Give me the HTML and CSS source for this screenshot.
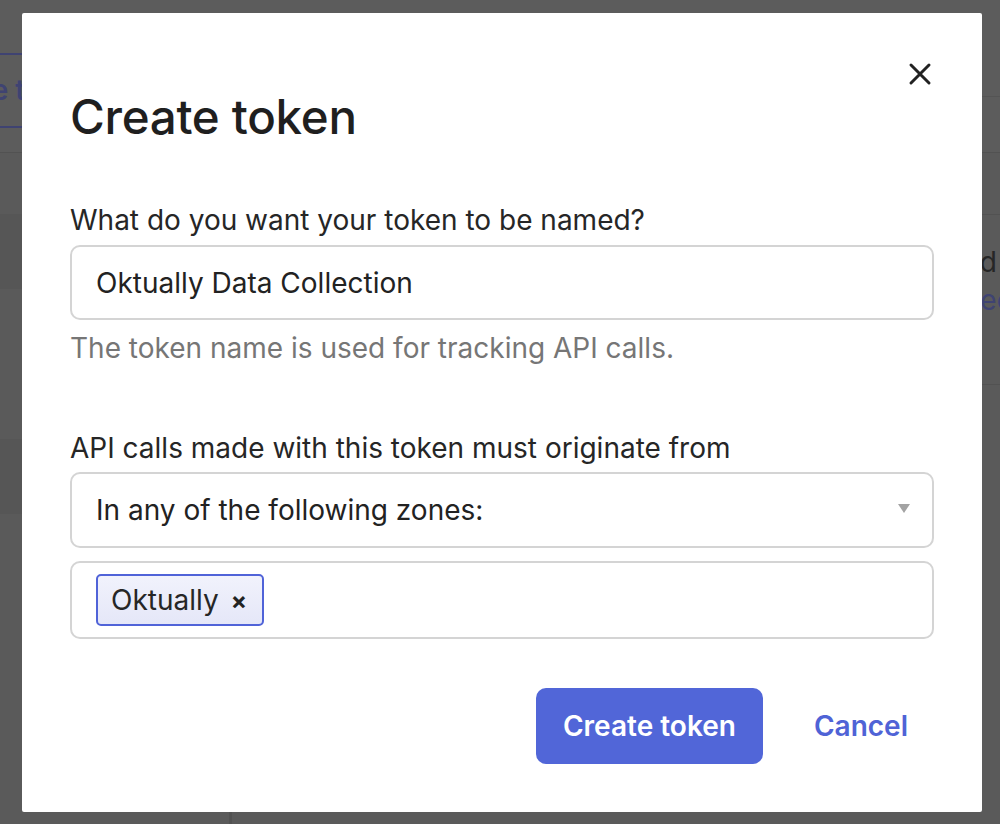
FILE: index.html
```html
<!DOCTYPE html>
<html lang="en">
<head>
<meta charset="utf-8">
<title>Create token</title>
<link rel="stylesheet" href="styles.css">
</head>
<body>
<div class="page">
  <header class="bg-top">
    <div class="bg-btn">Create token</div>
    <div class="bg-top-right"></div>
  </header>
  <div class="bg-main">
    <aside class="bg-side">
      <div class="bg-band"></div>
      <div class="bg-gap"></div>
      <div class="bg-band"></div>
    </aside>
    <section class="bg-content">
      <div class="bg-card">
        <p class="bg-dark">Tokens you have created</p>
        <p class="bg-link">View selected</p>
      </div>
    </section>
  </div>
</div>

<div class="overlay">
  <div class="modal" role="dialog" aria-labelledby="modal-title">
    <div class="modal-head">
      <h1 id="modal-title" class="modal-title">Create token</h1>
      <button class="close-btn" aria-label="Close">
        <svg width="24" height="24" viewBox="0 0 24 24"><path d="M3 3 L21 21 M21 3 L3 21" stroke="#222" stroke-width="3" stroke-linecap="round" fill="none"/></svg>
      </button>
    </div>

    <div class="field">
      <label class="field-label">What do you want your token to be named?</label>
      <div class="text-input">Oktually Data Collection</div>
      <p class="field-help">The token name is used for tracking API calls.</p>
    </div>

    <div class="field field-origin">
      <label class="field-label">API calls made with this token must originate from</label>
      <div class="select">
        <span>In any of the following zones:</span>
        <span class="select-arrow"></span>
      </div>
      <div class="chips">
        <span class="chip">Oktually <span class="chip-x">×</span></span>
      </div>
    </div>

    <div class="actions">
      <button class="btn-primary">Create token</button>
      <button class="btn-link">Cancel</button>
    </div>
  </div>
</div>
</body>
</html>
```

FILE: styles.css
```css
* { box-sizing: border-box; }
html, body {
  margin: 0;
  padding: 0;
  width: 1000px;
  height: 824px;
  overflow: hidden;
  font-family: Inter, "Noto Sans", "Liberation Sans", sans-serif;
}
body { position: relative; background: #5a5a5a; }

/* ---------- dimmed page behind the dialog ---------- */
.page {
  width: 1000px;
  height: 824px;
  background: #5a5a5a;
  display: flex;
  flex-direction: column;
}
.bg-top {
  height: 153px;
  border-bottom: 1px solid #525252;
  background: #5c5c5c;
  display: flex;
  align-items: flex-start;
  justify-content: space-between;
}
.bg-btn {
  margin-top: 53px;
  margin-left: -130px;
  width: 300px;
  height: 75px;
  border-top: 2px solid #3f4372;
  border-bottom: 2px solid #3f4372;
  color: #3f4372;
  font-size: 28px;
  font-weight: 600;
  line-height: 71px;
  padding-left: 48px;
  white-space: nowrap;
}
.bg-top-right {
  margin-top: 96px;
  width: 60px;
  border-top: 1px solid #545454;
}
.bg-main {
  flex: 1;
  display: flex;
}
.bg-side {
  width: 232px;
  border-right: 3px solid #525252;
  padding-top: 61px;
  display: flex;
  flex-direction: column;
}
.bg-band { height: 75px; background: #565656; }
.bg-gap { height: 150px; }
.bg-content {
  flex: 1;
  padding-top: 61px;
  display: flex;
  justify-content: flex-end;
}
.bg-card {
  width: 400px;
  height: 171px;
  border-top: 1px solid #525252;
  border-bottom: 1px solid #525252;
  text-align: right;
  font-size: 28px;
  padding-top: 28px;
}
.bg-card p { margin: 0; line-height: 38px; white-space: nowrap; }
.bg-card .bg-dark { color: #262626; margin-right: 3px; }
.bg-card .bg-link { color: #3f4372; margin-right: -55px; }

/* ---------- dialog ---------- */
.overlay {
  position: absolute;
  inset: 0;
  padding: 13px 18px 12px 22px;
}
.modal {
  width: 960px;
  height: 799px;
  background: #fff;
  border-radius: 2px;
  padding: 0 48px;
  color: #262626;
}
.modal-head {
  display: flex;
  justify-content: space-between;
  align-items: flex-start;
  padding-top: 75px;
}
.modal-title {
  margin: 0;
  font-size: 47.5px;
  font-weight: 500;
  line-height: 58px;
  letter-spacing: -0.3px;
  color: #1f1f1f;
}
.close-btn {
  margin-top: -26px;
  margin-right: 2px;
  width: 24px;
  height: 24px;
  padding: 0;
  border: 0;
  background: none;
}
.close-btn svg { display: block; }

.field { margin-top: 57px; }
.field-label {
  display: block;
  font-size: 28px;
  line-height: 34px;
  color: #262626;
}
.text-input, .select {
  margin-top: 8px;
  height: 75px;
  border: 2px solid #d4d4d4;
  border-radius: 10px;
  padding: 0 24px;
  display: flex;
  align-items: center;
  font-size: 28px;
  color: #222;
}
.field-help {
  margin: 11px 0 0;
  font-size: 28px;
  line-height: 34px;
  color: #767676;
}
.field-origin { margin-top: 66px; }
.select {
  margin-top: 7px;
  height: 76px;
  justify-content: space-between;
  padding-right: 22px;
}
.select-arrow {
  width: 0;
  height: 0;
  border-left: 6px solid transparent;
  border-right: 6px solid transparent;
  border-top: 9px solid #a3a3a3;
  margin-top: -4px;
}
.chips {
  margin-top: 13px;
  height: 78px;
  border: 2px solid #d4d4d4;
  border-radius: 10px;
  padding: 0 24px;
  display: flex;
  align-items: center;
}
.chip {
  height: 52px;
  border: 2px solid #5063d8;
  border-radius: 5px;
  background: linear-gradient(#f1f2fc, #e5e7f8);
  padding: 0 15px 0 13px;
  display: inline-flex;
  align-items: center;
  font-size: 28px;
  color: #262626;
  gap: 12px;
}
.chip-x {
  font-size: 24px;
  font-weight: 700;
  color: #222;
}

.actions {
  margin-top: 49px;
  display: flex;
  justify-content: flex-end;
  align-items: center;
}
.btn-primary {
  width: 227px;
  height: 76px;
  border: 0;
  border-radius: 10px;
  background: #5166d8;
  color: #fff;
  font-family: inherit;
  font-size: 28px;
  font-weight: 600;
}
.btn-link {
  margin-left: 51px;
  margin-right: 26px;
  padding: 0;
  border: 0;
  background: none;
  color: #4f63d6;
  font-family: inherit;
  font-size: 28px;
  font-weight: 600;
}
```
